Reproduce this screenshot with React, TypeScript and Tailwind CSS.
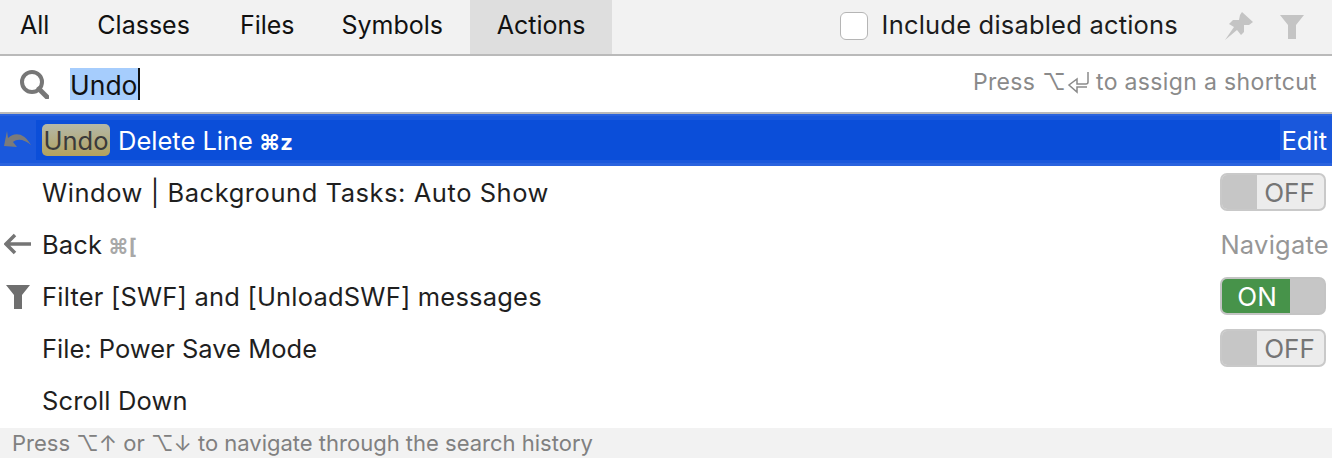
const font = "font-['Inter','DejaVu_Sans',sans-serif]";

function Toggle({ on }: { on?: boolean }) {
  if (on) {
    return (
      <div className="flex h-[38px] w-[106px] overflow-hidden rounded-[7px] border-[2px] border-[#c4c4c4] bg-[#c6c6c6]">
        <div className="flex w-[68px] items-center justify-center bg-[#47934a] pl-[2px] text-[26px] text-white">ON</div>
      </div>
    );
  }
  return (
    <div className="flex h-[38px] w-[106px] overflow-hidden rounded-[7px] border-[2px] border-[#c9c9c9] bg-[#ececec]">
      <div className="w-[35px] bg-[#c6c6c6]" />
      <div className="flex flex-1 items-center justify-center pr-[2px] text-[26px] text-[#757575]">OFF</div>
    </div>
  );
}

function Row({ icon, children, right, track }: { icon?: React.ReactNode; children: React.ReactNode; right?: React.ReactNode; track?: string }) {
  return (
    <div className="flex h-[52px] items-center">
      <div className="flex w-[42px] shrink-0 justify-center">{icon}</div>
      <div className={`flex-1 pt-[2px] text-[25.5px] whitespace-nowrap text-[#1f1f1f] ${track ?? "tracking-[0.15px]"}`}>{children}</div>
      {right}
    </div>
  );
}

function FilterIcon({ color }: { color: string }) {
  return (
    <svg width="26" height="25" viewBox="0 0 26 25">
      <path d="M1 1h24L17 11v14H9V11z" fill={color} />
    </svg>
  );
}

export default function App() {
  return (
    <div className={`${font} h-[458px] w-[1332px] overflow-hidden bg-white`}>
      {/* tabs */}
      <div className="flex h-[56px] items-stretch border-b-[2px] border-[#bababa] bg-[#f2f2f2] pl-[20px] text-[25px] text-[#111]">
        <div className="flex items-center pr-[48px] pb-[3px]">All</div>
        <div className="flex items-center pr-[50px] pb-[3px]">Classes</div>
        <div className="flex items-center pr-[47px] pb-[3px]">Files</div>
        <div className="flex items-center pr-[27px] pb-[3px]">Symbols</div>
        <div className="flex w-[142px] items-center justify-center bg-[#dedede] pb-[3px]">Actions</div>
        <div className="flex flex-1 items-center justify-end pb-[3px]">
          <div className="mr-[14px] h-[28px] w-[28px] rounded-[6px] border-[1px] border-[#b5b5b5] bg-white" />
          <span className="mr-[46px] text-[25.5px] tracking-[0.2px] text-[#1c1c1c]">Include disabled actions</span>
          <svg className="mr-[25px]" width="30" height="30" viewBox="0 0 30 30">
            <path d="M18 1 29 11 25 14 20 14 20 21 17 24 13 19 1 29 10 16 5 13 9 9 15 9 16 4z" fill="#c4c4c4" />
          </svg>
          <svg className="mr-[27px] mt-[3px]" width="26" height="26" viewBox="0 0 26 26">
            <path d="M1 1h24L17 11v14H9V11z" fill="#c4c4c4" />
          </svg>
        </div>
      </div>

      {/* search */}
      <div className="flex h-[58px] items-center border-b-[2px] border-[#bababa]">
        <svg className="ml-[19px]" width="30" height="30" viewBox="0 0 30 30" fill="none">
          <circle cx="13" cy="13" r="10" stroke="#777" strokeWidth="4" />
          <path d="M20 20l8 8" stroke="#777" strokeWidth="5" strokeLinecap="round" />
        </svg>
        <div className="ml-[21px] flex h-[32px] items-center bg-[#a6cdfd] pt-[2px] text-[26.5px] leading-[32px] text-[#111]">Undo</div>
        <div className="h-[32px] w-[2px] bg-[#111]" />
        <div className="flex flex-1 items-center justify-end pr-[15px] pb-[4px] text-[23px] tracking-[0.35px] whitespace-nowrap text-[#8a8a8a]">
          <span>Press ⌥</span>
          <svg className="mr-[7px] ml-[1px]" width="22" height="24" viewBox="0 0 22 24" fill="none">
            <path d="M21 2v10a2 2 0 0 1-2 2H10V9L2 15l8 7v-5h10" stroke="#8a8a8a" strokeWidth="1.5" />
          </svg>
          <span>to assign a shortcut</span>
        </div>
      </div>

      {/* results */}
      <div className="h-[52px] bg-[#2a63de] pt-[2px] pb-[3px]">
        <div className="h-full bg-[#1a58dc] pt-[4px] pb-[3px]">
          <div className="flex h-[40px] items-center bg-[#0b4ed9]">
            <div className="flex h-full w-[36px] shrink-0 items-center justify-center bg-[#1a58dc]">
              <svg width="30" height="22" viewBox="0 0 30 22">
                <path d="M4 2 5 9C11 3 21 3 28 16 22 11 15 9 10 13L14 18 1 17z" fill="#7b7b7b" />
              </svg>
            </div>
            <div className="ml-[6px] flex h-[32px] w-[68px] items-center justify-center rounded-[5px] bg-gradient-to-b from-[#b4b8a8] to-[#b2a25c] pt-[2px] text-[25.5px] text-[#3a3a3a]">
              Undo
            </div>
            <span className="ml-[8px] flex-1 pt-[2px] text-[25.5px] whitespace-nowrap text-white">
              Delete Line<span className="ml-[6px] text-[22px] font-bold">⌘z</span>
            </span>
            <div className="flex h-full w-[52px] shrink-0 items-center justify-end bg-[#1a58dc] pt-[2px] pr-[5px] text-[25.5px] text-white">Edit</div>
          </div>
        </div>
      </div>
      <Row track="tracking-[0.55px]" right={<div className="mr-[6px]"><Toggle /></div>}>Window | Background Tasks: Auto Show</Row>
      <Row
        icon={
          <svg className="ml-[-6px]" width="28" height="22" viewBox="0 0 28 22" fill="none">
            <path d="M11 2 2 11l9 9M2 11h25" stroke="#757575" strokeWidth="3.5" />
          </svg>
        }
        right={<span className="pt-[2px] pr-[3px] text-[25.5px] tracking-[0.25px] text-[#979797]">Navigate</span>}
      >
        Back<span className="ml-[6px] text-[21px] font-bold text-[#a8a8a8]">⌘[</span>
      </Row>
      <Row track="tracking-[0.2px]" icon={<div className="ml-[-6px]"><FilterIcon color="#6f6f6f" /></div>} right={<div className="mr-[6px]"><Toggle on /></div>}>
        Filter [SWF] and [UnloadSWF] messages
      </Row>
      <Row track="tracking-[0.01px]" right={<div className="mr-[6px]"><Toggle /></div>}>File: Power Save Mode</Row>
      <Row>Scroll Down</Row>

      {/* footer */}
      <div className="mt-[2px] flex h-[30px] items-center bg-[#f2f2f2] pt-[1px] pl-[12px] text-[22px] whitespace-nowrap text-[#808080]">
        Press ⌥↑ or ⌥↓ to navigate through the search history
      </div>
    </div>
  );
}
